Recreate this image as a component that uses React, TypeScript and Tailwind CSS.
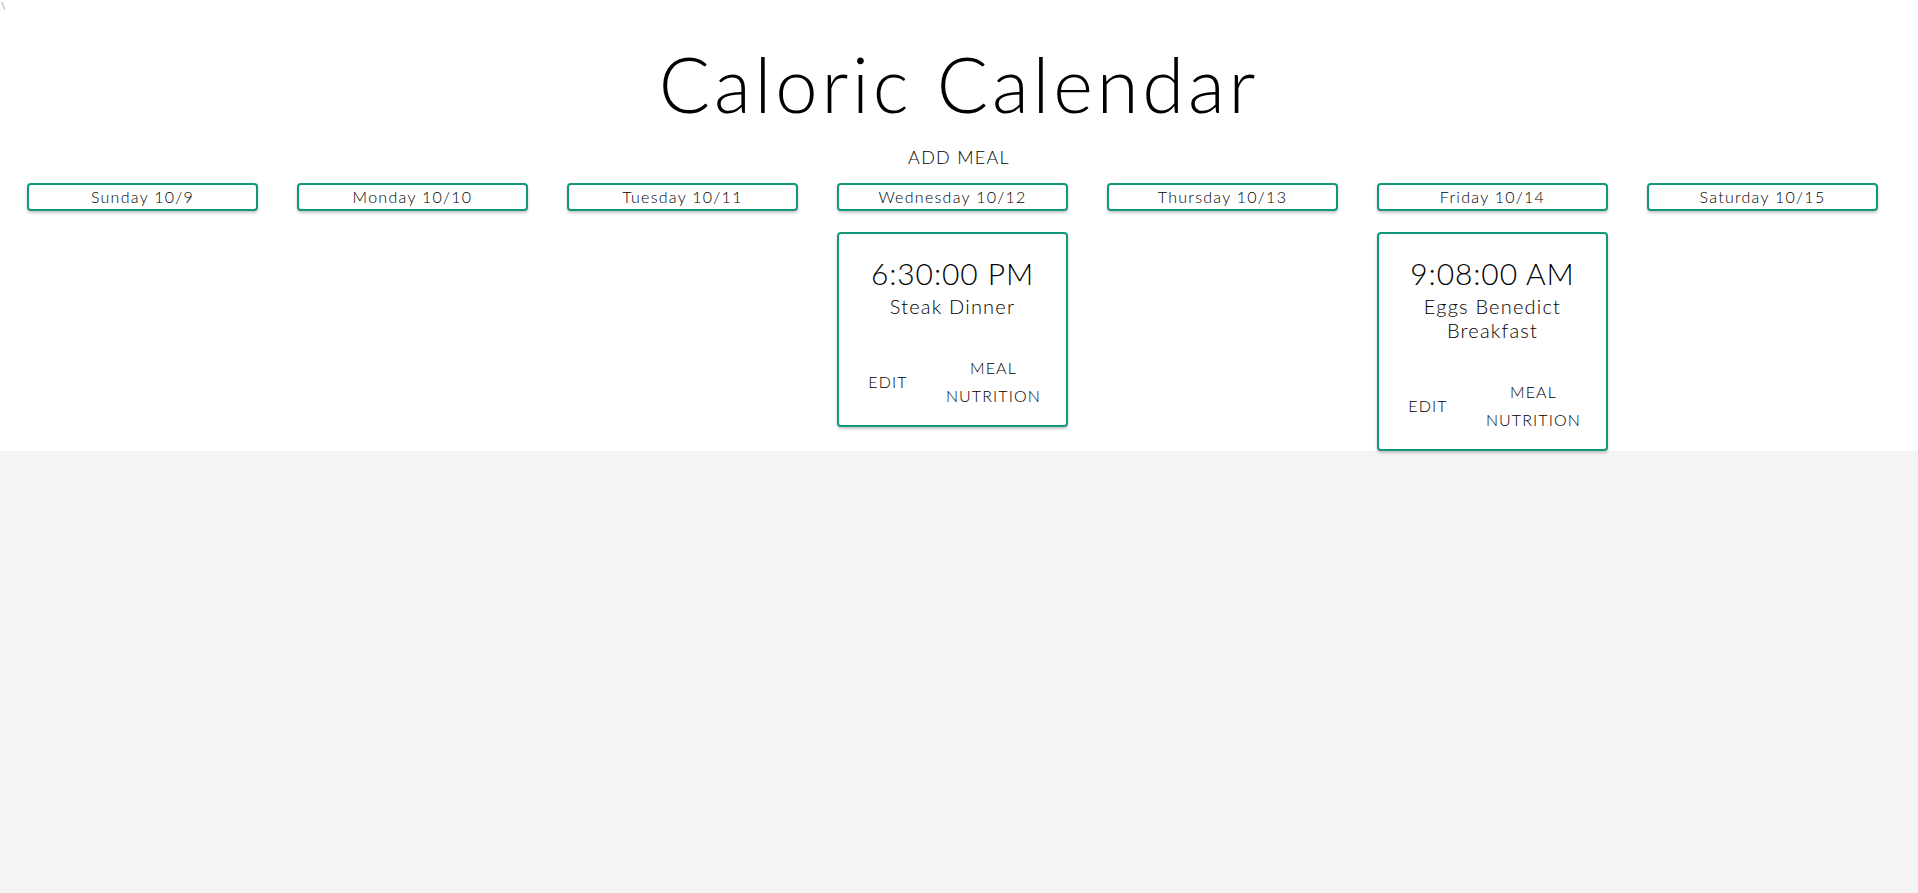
type Meal = { time: string; name: string };

type Day = { label: string; meals: Meal[] };

const days: Day[] = [
  { label: "Sunday 10/9", meals: [] },
  { label: "Monday 10/10", meals: [] },
  { label: "Tuesday 10/11", meals: [] },
  { label: "Wednesday 10/12", meals: [{ time: "6:30:00 PM", name: "Steak Dinner" }] },
  { label: "Thursday 10/13", meals: [] },
  { label: "Friday 10/14", meals: [{ time: "9:08:00 AM", name: "Eggs Benedict Breakfast" }] },
  { label: "Saturday 10/15", meals: [] },
];

function MealCard({ meal }: { meal: Meal }) {
  return (
    <div className="flex flex-col rounded-[4px] border-2 border-[#12977a] bg-white shadow-[0_2px_3px_rgba(0,0,0,0.22)]">
      <div className="px-[16px] pt-[21px] text-center text-black">
        <div className="text-[30px] leading-[36px] tracking-[0.03em]">{meal.time}</div>
        <div className="mt-[3px] text-[20px] leading-[24px] tracking-[0.06em]">{meal.name}</div>
      </div>
      <div className="mt-[30px] flex items-center justify-around px-[8px] pb-[9px] text-[16px] uppercase leading-[28px] tracking-[0.07em] text-black">
        <button className="min-w-[64px] px-[8px] py-[6px] text-center uppercase">Edit</button>
        <button className="px-[8px] py-[6px] text-center uppercase">
          <span className="block">Meal</span>
          <span className="block">Nutrition</span>
        </button>
      </div>
    </div>
  );
}

export default function App() {
  return (
    <div className="min-h-screen bg-[#f4f4f4] font-['Lato',sans-serif] font-light">
      <div className="relative bg-white">
        <span className="absolute left-[1px] top-0 text-[10px] leading-[10px] text-black">\</span>
        <h1 className="pt-[38px] text-center text-[76px] leading-[91px] tracking-[0.05em] text-black">
          Caloric Calendar
        </h1>
        <div className="mt-[16px] flex justify-center">
          <button className="text-[18px] uppercase leading-[24px] tracking-[0.07em] text-black">Add Meal</button>
        </div>
        <div className="mt-[14px] flex gap-[39px] pl-[27px] pr-[40px]">
          {days.map((day) => (
            <div key={day.label} className="flex flex-1 flex-col gap-[21px]">
              <div className="rounded-[4px] border-2 border-[#12977a] bg-white text-center text-[16px] leading-[24px] tracking-[0.08em] text-black shadow-[0_2px_3px_rgba(0,0,0,0.22)]">
                {day.label}
              </div>
              {day.meals.map((meal) => (
                <MealCard key={meal.time} meal={meal} />
              ))}
            </div>
          ))}
        </div>
      </div>
    </div>
  );
}
